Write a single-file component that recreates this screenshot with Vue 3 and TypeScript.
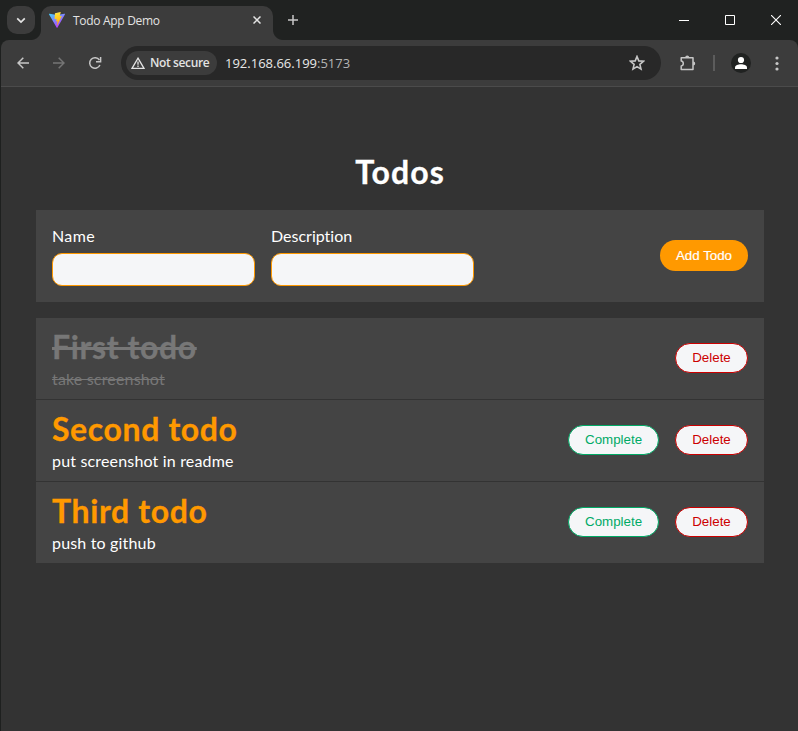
<script setup lang="ts">
import { ref } from 'vue'

interface Todo {
  id: number
  name: string
  description: string
  done: boolean
}

const name = ref('')
const description = ref('')
const todos = ref<Todo[]>([
  { id: 1, name: 'First todo', description: 'take screenshot', done: true },
  { id: 2, name: 'Second todo', description: 'put screenshot in readme', done: false },
  { id: 3, name: 'Third todo', description: 'push to github', done: false },
])

function addTodo(): void {
  if (!name.value.trim()) return
  todos.value.push({ id: Date.now(), name: name.value, description: description.value, done: false })
  name.value = ''
  description.value = ''
}

function removeTodo(id: number): void {
  todos.value = todos.value.filter((t) => t.id !== id)
}
</script>

<template>
  <div class="window">
    <header class="tabstrip">
      <div class="tab-search">
        <svg width="10" height="7" viewBox="0 0 10 7"><path d="M1.2 1.3 5 5.1 8.8 1.3" fill="none" stroke="#e3e3e3" stroke-width="1.7" /></svg>
      </div>
      <div class="tab">
        <svg class="favicon" width="16" height="16" viewBox="0 0 32 32">
          <defs>
            <linearGradient id="shield" x1="0" y1="0" x2="0.65" y2="1">
              <stop offset="0" stop-color="#41d1ff" />
              <stop offset="1" stop-color="#bd34fe" />
            </linearGradient>
            <linearGradient id="bolt" x1="0.4" y1="0" x2="0.6" y2="1">
              <stop offset="0" stop-color="#ffea83" />
              <stop offset="0.1" stop-color="#ffdd35" />
              <stop offset="1" stop-color="#ffa800" />
            </linearGradient>
          </defs>
          <path d="M31.8 4.8 17 31.2a1 1 0 0 1-1.8 0L.2 4.8A1 1 0 0 1 1.300 3.300L16 6 30.700 3.300a1 1 0 0 1 1.100 1.500z" fill="url(#shield)" />
          <path d="M23 .2 12.200 2.300a.4.4 0 0 0-.3.4l-.7 11.300a.4.4 0 0 0 .5.400l3-.7a.4.4 0 0 1 .5.500l-.9 4.400a.4.4 0 0 0 .5.500l1.900-.6a.4.4 0 0 1 .5.500l-1.400 6.900c-.1.400.5.700.7.300l.2-.2 8.800-17.500a.4.4 0 0 0-.4-.6l-3.100.6a.4.4 0 0 1-.5-.5L23.500.7A.4.4 0 0 0 23 .2z" fill="url(#bolt)" />
        </svg>
        <span class="tab-title">Todo App Demo</span>
        <svg class="tab-close" width="8" height="8" viewBox="0 0 8 8"><path d="M.5.5l7 7M7.500.5l-7 7" stroke="#e3e3e3" stroke-width="1.5" /></svg>
      </div>
      <svg class="new-tab" width="10" height="10" viewBox="0 0 10 10"><path d="M5 0v10M0 5h10" stroke="#c7c7c7" stroke-width="1.500" /></svg>
      <div class="controls">
        <svg width="10" height="11" viewBox="0 0 10 11"><path d="M0 5.500h10" stroke="#fff" /></svg>
        <svg width="10" height="10" viewBox="0 0 10 10"><path d="M.5.5h9v9h-9z" fill="none" stroke="#fff" /></svg>
        <svg width="10" height="10" viewBox="0 0 10 10"><path d="M0 0l10 10M10 0 0 10" stroke="#fff" stroke-width="1.100" /></svg>
      </div>
    </header>

    <nav class="toolbar">
      <svg class="back" width="12" height="12" viewBox="0 0 12 12"><path d="M6.300.7 1 6l5.300 5.300M1 6h11" fill="none" stroke="#c7c7c7" stroke-width="1.500" /></svg>
      <svg class="forward" width="12" height="12" viewBox="0 0 12 12"><path d="M5.700.7 11 6l-5.300 5.300M11 6H0" fill="none" stroke="#757575" stroke-width="1.500" /></svg>
      <svg class="reload" width="14" height="14" viewBox="0 0 14 14">
        <path d="M11.900 9A5.300 5.300 0 1 1 11.400 4" fill="none" stroke="#c7c7c7" stroke-width="1.500" />
        <path d="M12.600 1v4.700H8" fill="none" stroke="#c7c7c7" stroke-width="1.500" />
      </svg>
      <div class="address">
        <div class="chip">
          <svg width="14" height="12" viewBox="0 0 14 12">
            <path d="M7 1.200 13 11.300H1z" fill="none" stroke="#e3e3e3" stroke-width="1.300" />
            <path d="M7 4.500v3.200M7 8.600v1.300" stroke="#e3e3e3" stroke-width="1.300" />
          </svg>
          <span class="chip-text">Not secure</span>
        </div>
        <span class="url">192.168.66.199<span class="port">:5173</span></span>
        <svg class="star" width="16" height="16" viewBox="0 0 16 16"><path d="M8 1.500l1.800 4.400 4.700.4-3.600 3.100 1.100 4.700L8 11.600l-4 2.500 1.100-4.700L1.500 6.300l4.700-.4z" fill="none" stroke="#c7c7c7" stroke-width="1.600" /></svg>
      </div>
      <svg class="puzzle" width="16" height="16" viewBox="0 0 16 16">
        <path d="M1.200 2.700H13v11.700H1.200V11c2.800-.4 2.800-4.500 0-4.900z" fill="none" stroke="#c7c7c7" stroke-width="1.500" stroke-linejoin="round" />
        <path d="M5.200 2.500a2 2 0 0 1 4 0zM13.200 6.500a2 2 0 0 1 0 4z" fill="#c7c7c7" />
      </svg>
      <span class="divider"></span>
      <svg class="avatar" width="20" height="20" viewBox="0 0 20 20">
        <circle cx="10" cy="10" r="10" fill="#202221" />
        <circle cx="10" cy="7" r="3.100" fill="#fff" />
        <path d="M4 16v-1.500c0-2.200 3.300-3.300 6-3.300s6 1.100 6 3.300V16z" fill="#fff" />
      </svg>
      <svg class="menu" width="4" height="15" viewBox="0 0 4 15"><g fill="#c7c7c7"><circle cx="2" cy="2" r="1.600" /><circle cx="2" cy="7.500" r="1.600" /><circle cx="2" cy="13" r="1.600" /></g></svg>
    </nav>

    <main class="page">
      <h1 class="title">Todos</h1>
      <form class="form" @submit.prevent="addTodo">
        <label class="field"><span class="label-name">Name</span><input v-model="name" type="text" /></label>
        <label class="field"><span>Description</span><input v-model="description" type="text" /></label>
        <button class="btn add" type="submit">Add Todo</button>
      </form>
      <ul class="list">
        <li v-for="todo in todos" :key="todo.id" class="row" :class="{ done: todo.done }">
          <div class="text">
            <h2>{{ todo.name }}</h2>
            <p>{{ todo.description }}</p>
          </div>
          <button v-if="!todo.done" class="btn complete" type="button" @click="todo.done = true">Complete</button>
          <button class="btn delete" type="button" @click="removeTodo(todo.id)">Delete</button>
        </li>
      </ul>
    </main>
  </div>
</template>

<style>
body {
  margin: 0;
  background: #333;
}
</style>

<style scoped>
* {
  box-sizing: border-box;
}
svg {
  display: block;
  flex: none;
}
.window {
  width: 798px;
  height: 731px;
  overflow: hidden;
  display: flex;
  flex-direction: column;
  background: #1e201f;
  font-family: 'Open Sans', 'Noto Sans', sans-serif;
}
.tabstrip {
  height: 40px;
  flex: none;
  display: flex;
  align-items: center;
  padding-left: 7px;
  background: #202221;
}
.tab-search {
  width: 28px;
  height: 28px;
  border-radius: 10px;
  background: #3c3c3c;
  display: flex;
  align-items: center;
  justify-content: center;
}
.tab {
  position: relative;
  width: 232px;
  height: 34px;
  margin: 6px 0 0 6px;
  padding: 0 12px 6px 8px;
  border-radius: 10px 10px 0 0;
  background: #3c3c3c;
  display: flex;
  align-items: center;
}
.tab::before,
.tab::after {
  content: '';
  position: absolute;
  bottom: 0;
  width: 10px;
  height: 10px;
}
.tab::before {
  left: -10px;
  background: radial-gradient(circle at 0 0, transparent 9.5px, #3c3c3c 10.5px);
}
.tab::after {
  right: -10px;
  background: radial-gradient(circle at 100% 0, transparent 9.5px, #3c3c3c 10.5px);
}
.tab-title {
  margin-left: 8px;
  padding-top: 2px;
  font-size: 12px;
  line-height: 16px;
  letter-spacing: -0.3px;
  color: #e3e3e3;
  white-space: nowrap;
}
.tab-close {
  margin-left: auto;
}
.new-tab {
  margin-left: 15px;
}
.controls {
  margin-left: auto;
  display: flex;
  align-items: center;
  gap: 36px;
  padding-right: 17px;
}
.toolbar {
  height: 47px;
  flex: none;
  display: flex;
  align-items: center;
  margin-left: 1px;
  padding-left: 16px;
  border-bottom: 1px solid #4b4b4b;
  border-radius: 8px 8px 0 0;
  background: #3c3c3c;
}
.forward {
  margin-left: 24px;
}
.reload {
  margin-left: 23px;
}
.address {
  width: 540px;
  height: 34px;
  margin-left: 19px;
  padding: 0 16px 0 5px;
  border-radius: 17px;
  background: #282828;
  display: flex;
  align-items: center;
}
.chip {
  width: 91px;
  height: 24px;
  padding-left: 5px;
  border-radius: 12px;
  background: #3c3c3c;
  display: flex;
  align-items: center;
}
.chip-text {
  margin-left: 5px;
  font-size: 12px;
  line-height: 16px;
  font-weight: 600;
  letter-spacing: -0.38px;
  color: #e3e3e3;
  white-space: nowrap;
}
.url {
  margin-left: 8px;
  font-size: 13px;
  line-height: 18px;
  color: #e8e8e8;
}
.port {
  color: #b4b4b4;
}
.star {
  margin-left: auto;
}
.puzzle {
  margin-left: 19px;
}
.divider {
  width: 2px;
  height: 16px;
  margin-left: 17px;
  background: #5c5c5c;
}
.avatar {
  margin-left: 16px;
}
.menu {
  margin-left: 24px;
}
.page {
  flex: 1;
  margin-left: 1px;
  padding: 61px 34px 0 35px;
  background: #333;
  color: #fff;
  font-family: Lato, 'Open Sans', sans-serif;
  font-variant-ligatures: none;
}
.title {
  height: 44px;
  margin: 0 0 18px;
  padding-top: 2px;
  font-size: 32px;
  line-height: 44px;
  letter-spacing: 1.05px;
  text-align: center;
  -webkit-text-stroke: 0.3px;
}
.form {
  height: 92px;
  margin: 0;
  padding: 15px 16px 16px;
  background: #444;
  display: flex;
  gap: 16px;
  align-items: flex-start;
}
.field {
  display: flex;
  flex-direction: column;
  align-items: flex-start;
  gap: 6px;
  font-size: 16px;
  line-height: 22px;
}
.label-name {
  letter-spacing: 0.35px;
}
.field input {
  width: 203px;
  height: 33px;
  padding: 0 8px;
  border: 1px solid #f90;
  border-radius: 10px;
  background: #f5f6f8;
  outline: none;
}
.btn {
  height: 30px;
  padding: 0 16px;
  border: 1px solid;
  border-radius: 16px;
  background: #f5f6f8;
  font: 13.333px 'Liberation Sans', Arial, sans-serif;
  white-space: nowrap;
}
.add {
  width: 88px;
  height: 31px;
  margin: 0 0 1px auto;
  padding: 0;
  align-self: center;
  border: 0;
  background: #f90;
  color: #fff;
  -webkit-text-stroke: 0.2px;
}
.list {
  margin: 16px 0 0;
  padding: 0;
  list-style: none;
}
.row {
  height: 82px;
  padding: 0 16px 2px;
  border-bottom: 1px solid #333;
  background: #444;
  display: flex;
  align-items: center;
  gap: 16px;
}
.row:last-child {
  height: 81px;
  border-bottom: 0;
}
.text {
  flex: 1;
}
.text h2 {
  margin: 0;
  font-size: 32px;
  line-height: 44px;
  letter-spacing: 0.62px;
  color: #f90;
  -webkit-text-stroke: 0.3px;
}
.text p {
  margin: -1px 0 0;
  padding-bottom: 1px;
  font-size: 16px;
  line-height: 22px;
  letter-spacing: 0.17px;
}
.done h2,
.done p {
  color: #777;
  text-decoration: line-through;
}
.complete {
  width: 91px;
  border-color: #0a6;
  color: #0a6;
}
.delete {
  width: 73px;
  border-color: #c00;
  color: #c00;
}
</style>
